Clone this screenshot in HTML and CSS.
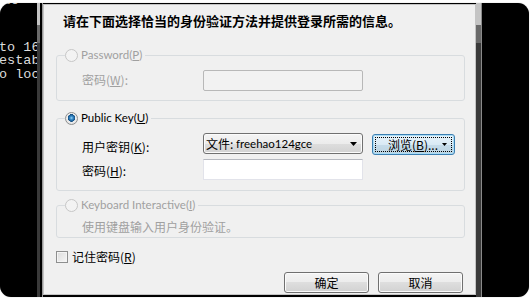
FILE: index.html
```html
<!DOCTYPE html>
<html lang="zh-CN">
<head>
<meta charset="utf-8">
<link rel="stylesheet" href="styles.css">
</head>
<body>
<div class="frame">
  <div class="term">
    <div class="t0">to</div>
    <div class="t1">to 16<br>estab<br>o loc</div>
  </div>
  <div class="lstrip"></div>
  <div class="dialog">
    <div class="title">请在下面选择恰当的身份验证方法并提供登录所需的信息。</div>

    <fieldset class="group g1 disabled">
      <legend><span class="radio"></span><span class="en">Password(<u>P</u>)</span></legend>
      <div class="row">
        <span class="lbl">密码(<u>W</u>):</span>
        <span class="input dis"></span>
      </div>
    </fieldset>

    <fieldset class="group g2">
      <legend><span class="radio on"></span><span class="en">Public Key(<u>U</u>)</span></legend>
      <div class="row r1">
        <span class="lbl">用户密钥(<u>K</u>):</span>
        <span class="combo"><span class="ctext">文件:&nbsp;</span><span class="en">freehao124gce</span><svg class="carrow" width="7" height="4" viewBox="0 0 7 4"><path d="M0 0H7L3.5 4Z" fill="#000"/></svg></span>
        <span class="browse"><span class="focus"><span class="btxt">浏览(<u>B</u>)...</span><svg class="barrow" width="5" height="3" viewBox="0 0 5 3"><path d="M0 0H5L2.5 3Z" fill="#000"/></svg></span></span>
      </div>
      <div class="row r2">
        <span class="lbl">密码(<u>H</u>):</span>
        <span class="input"></span>
      </div>
    </fieldset>

    <fieldset class="group g3 disabled">
      <legend><span class="radio"></span><span class="en">Keyboard Interactive(<u>I</u>)</span></legend>
      <div class="desc">使用键盘输入用户身份验证。</div>
    </fieldset>

    <div class="remember"><span class="box"></span>记住密码(<u>R</u>)</div>

    <div class="buttons">
      <span class="btn">确定</span>
      <span class="btn">取消</span>
    </div>
  </div>
  <div class="rstrip"></div>
  <div class="rest"></div>
</div>
</body>
</html>
```

FILE: styles.css
```css
* { box-sizing: border-box; }
html, body { margin: 0; padding: 0; }
body { background: #fff; width: 530px; height: 300px; overflow: hidden; }

.frame {
  margin-top: 3px;
  width: 529px;
  height: 294px;
  border-radius: 11px;
  background: #000;
  display: flex;
  overflow: hidden;
  box-shadow: 0 0 1px #999;
}

.term {
  width: 37px;
  flex: none;
  overflow: hidden;
  color: #dcdcdc;
  font: 13.5px/13.5px "Liberation Mono", "DejaVu Sans Mono", monospace;
  white-space: nowrap;
}
.term .t0 { margin-top: -9px; padding-left: 3px; }
.term .t1 { margin-top: 33px; margin-left: -1px; }

.lstrip {
  width: 6px;
  flex: none;
  background:
    linear-gradient(to right, transparent 0 3px, #000 3px 5px, #9a9a9a 5px 6px),
    linear-gradient(to bottom, #c4c4c4 0 22px, #6a6a6a 22px 40px, #3a3a3a 40px);
}

.dialog {
  width: 433px;
  flex: none;
  margin: 1px 0 2px;
  border: 1px solid #c4c4c4;
  background: #f0f0f0;
  display: flex;
  flex-direction: column;
  font: 12px/14px "Noto Sans CJK SC", sans-serif;
  color: #000;
}

.en {
  font-family: "Lato", "Noto Sans CJK SC", sans-serif;
  font-size: 11.5px;
  line-height: 14px;
}

.title {
  margin: 8px 0 0 19px;
  font-weight: 700;
  font-size: 13px;
  line-height: 16px;
  white-space: nowrap;
}

.group {
  margin: 0 10px 0 12px;
  padding: 0 0 9px 8px;
  border: 1px solid #d8dcdf;
  border-radius: 3px;
  min-width: 0;
}
.group legend {
  display: flex;
  align-items: center;
  height: 14px;
  padding: 0 3px 0 0;
  white-space: nowrap;
}
.g1 { margin-top: 19px; }
.g2 { margin-top: 10px; padding-bottom: 10px; }
.g3 { margin-top: 7px; padding-bottom: 2px; }

.disabled, .disabled legend { color: #a0a0a0; }

.radio {
  flex: none;
  width: 13px;
  height: 13px;
  border-radius: 50%;
  margin-right: 3px;
  border: 1px solid #8e8f8f;
  background: radial-gradient(circle at 50% 40%, #fff 0, #e8e8e8 70%, #d4d4d4 100%);
}
.disabled .radio {
  border-color: #c6c6c6;
  background: #f3f3f3;
}
.radio.on {
  background:
    radial-gradient(circle at 50% 45%, #9ad7f5 0, #3b8fce 1.5px, #1c5f97 3px, #154f80 3.6px, transparent 4px),
    radial-gradient(circle at 50% 40%, #fff 0, #e6e6e6 70%, #d2d2d2 100%);
}

.row {
  display: flex;
  align-items: flex-start;
  margin-left: 17px;
}
.lbl { width: 121px; flex: none; white-space: nowrap; }
.g1 .row { margin-top: 8px; }
.g1 .lbl { margin-top: 3px; }
.g2 .r1 { margin-top: 8px; }
.g2 .r1 .lbl { margin-top: 7px; }
.g2 .r2 { margin-top: 4px; }
.g2 .r2 .lbl { margin-top: 5px; }

.input {
  width: 160px;
  height: 21px;
  background: #fff;
  border: 1px solid #e2e3ea;
  border-top-color: #b5b8bf;
}
.input.dis {
  background: #f2f2f2;
  border: 1px solid #b8b8b8;
  border-radius: 2px;
}

.combo {
  width: 160px;
  height: 21px;
  border: 1px solid #707070;
  border-radius: 3px;
  background: linear-gradient(#f4f4f4 0%, #ececec 50%, #dedede 50%, #d2d2d2 100%);
  box-shadow: inset 0 0 0 1px #fbfbfb;
  display: flex;
  align-items: center;
  padding: 0 5px 0 2px;
  white-space: nowrap;
}
.combo .en { flex: 1; }
.carrow { flex: none; margin-top: 1px; }

.browse {
  width: 83px;
  height: 21px;
  margin-left: 9px;
  margin-top: 1px;
  border: 1px solid #3c7fb1;
  border-radius: 3px;
  background: linear-gradient(#e8f3fa 0%, #d9eaf5 50%, #c6dcea 50%, #bdd4e2 100%);
  box-shadow: inset 0 0 0 1px #a9dcf6;
  padding: 2px;
  display: flex;
}
.focus {
  flex: 1;
  border: 1px dotted #000;
  display: flex;
  align-items: center;
  padding: 0 4px 0 12px;
  white-space: nowrap;
}
.btxt { flex: 1; }
.barrow { flex: none; }

.desc {
  margin: 7px 0 0 17px;
  line-height: 16px;
  white-space: nowrap;
}

.remember {
  margin: 12px 0 0 12px;
  display: flex;
  align-items: center;
  line-height: 14px;
  white-space: nowrap;
}
.box {
  width: 12px;
  height: 12px;
  margin-right: 4px;
  border: 1px solid #8e8f8f;
  background: linear-gradient(135deg, #dcdcdc, #f6f6f6);
  box-shadow: inset 0 0 0 1px #f4f4f4;
}

.buttons {
  margin-top: 8px;
  display: flex;
  justify-content: flex-end;
  gap: 9px;
  padding-right: 12px;
}
.btn {
  width: 85px;
  height: 21px;
  border: 1px solid #707070;
  border-radius: 3px;
  background: linear-gradient(#f4f4f4 0%, #ececec 50%, #dedede 50%, #d2d2d2 100%);
  box-shadow: inset 0 0 0 1px #fbfbfb;
  text-align: center;
  line-height: 19px;
}

.rstrip {
  width: 6px;
  flex: none;
  background:
    linear-gradient(to right, transparent 0 5px, #8a8a8a 5px 6px),
    linear-gradient(to bottom, #c4c4c4 0 22px, #6a6a6a 22px 40px, #3a3a3a 40px);
}
.rest { flex: 1; }
```
